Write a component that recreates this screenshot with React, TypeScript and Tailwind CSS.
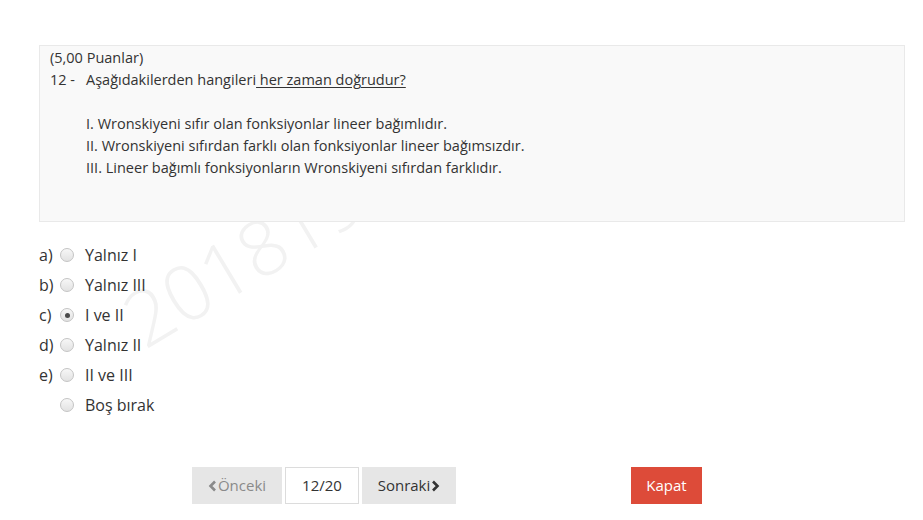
import React from "react";

const options = [
  { key: "a)", text: "Yalnız I" },
  { key: "b)", text: "Yalnız III" },
  { key: "c)", text: "I ve II", checked: true },
  { key: "d)", text: "Yalnız II" },
  { key: "e)", text: "II ve III" },
  { key: "", text: "Boş bırak" },
];

function Radio({ checked }: { checked?: boolean }) {
  return (
    <span className="flex h-[14px] w-[14px] shrink-0 items-center justify-center rounded-full border border-[#c4c4c4] bg-gradient-to-b from-[#f7f7f7] to-[#e2e2e2]">
      {checked && <span className="h-[5px] w-[5px] rounded-full bg-[#4a4a4a]" />}
    </span>
  );
}

function Chevron({ dir }: { dir: "left" | "right" }) {
  return (
    <svg width="9" height="12" viewBox="0 0 9 12" className="shrink-0">
      <path
        d={dir === "left" ? "M7 1.5 L2.5 6 L7 10.5" : "M2 1.5 L6.5 6 L2 10.5"}
        fill="none"
        stroke="currentColor"
        strokeWidth="2.6"
        strokeLinejoin="miter"
      />
    </svg>
  );
}

export default function App() {
  return (
    <div className="relative h-[520px] w-[923px] overflow-hidden bg-white font-['Open_Sans',sans-serif] text-[#333]">
      {/* watermark */}
      <div className="pointer-events-none absolute left-[110px] top-[292px] origin-top-left -rotate-[31deg] select-none text-[77px] font-light leading-none text-[#f2f2f2]">
        201819
      </div>

      <div className="relative pl-[39px] pr-[18px] pt-[45px]">
        <div className="relative z-10 h-[177px] border border-[#e9e9e9] bg-[#f9f9f9] px-[10px] pt-[1px] text-[14.5px] leading-[22px]">
          <div>(5,00 Puanlar)</div>
          <div className="flex">
            <span className="w-[36px] shrink-0">12 -</span>
            <div>
              <div>
                Aşağıdakilerden hangileri
                <span className="underline underline-offset-2"> her zaman doğrudur?</span>
              </div>
              <div className="h-[22px]" />
              <div>I. Wronskiyeni sıfır olan fonksiyonlar lineer bağımlıdır.</div>
              <div>II. Wronskiyeni sıfırdan farklı olan fonksiyonlar lineer bağımsızdır.</div>
              <div>III. Lineer bağımlı fonksiyonların Wronskiyeni sıfırdan farklıdır.</div>
            </div>
          </div>
        </div>

        <div className="mt-[18px] flex flex-col text-[16px]">
          {options.map((o) => (
            <label key={o.text} className="flex h-[30px] items-center">
              <span className="w-[21px] shrink-0">{o.key}</span>
              <Radio checked={o.checked} />
              <span className="ml-[11px]">{o.text}</span>
            </label>
          ))}
        </div>

        <div className="mt-[47px] flex items-center text-[15px]">
          <div className="ml-[153px] flex items-center gap-[3px]">
            <button className="flex h-[37px] w-[90px] items-center justify-center gap-[1px] bg-[#e6e6e6] text-[#8a8a8a]">
              <Chevron dir="left" />
              Önceki
            </button>
            <div className="flex h-[37px] w-[74px] items-center justify-center border border-[#dcdcdc] bg-white">
              12/20
            </div>
            <button className="flex h-[37px] w-[94px] items-center justify-center gap-[1px] bg-[#e6e6e6] text-[#333]">
              Sonraki
              <Chevron dir="right" />
            </button>
          </div>
          <button className="ml-[175px] flex h-[37px] w-[71px] items-center justify-center bg-[#dd4b39] text-white">
            Kapat
          </button>
        </div>
      </div>
    </div>
  );
}
